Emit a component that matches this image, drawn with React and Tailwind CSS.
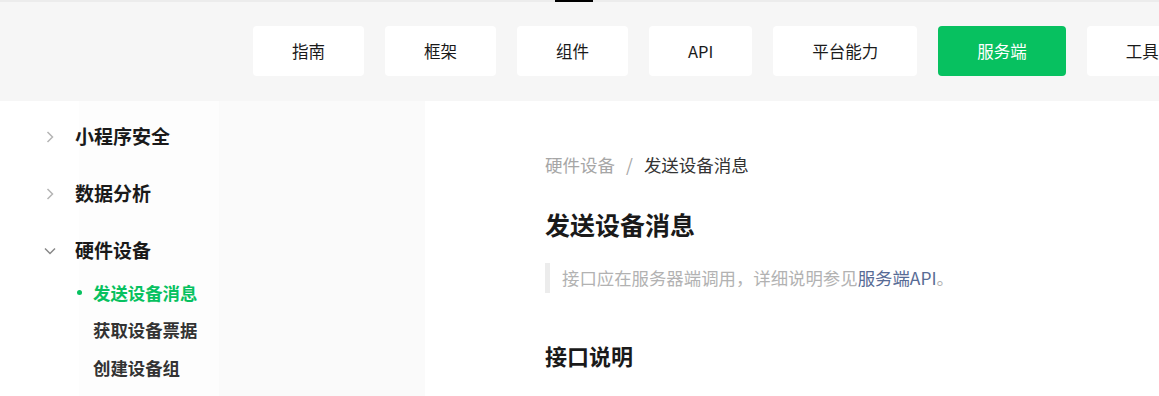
import React from 'react';

const navItems = ['指南', '框架', '组件', 'API', '平台能力', '服务端', '工具'];

const groups = [
  { title: '小程序安全', open: false },
  { title: '数据分析', open: false },
  { title: '硬件设备', open: true },
];

const subItems = [
  { title: '发送设备消息', active: true },
  { title: '获取设备票据' },
  { title: '创建设备组' },
];

function Chevron({ open }) {
  return (
    <svg width="16" height="16" viewBox="0 0 16 16" fill="none">
      {open ? (
        <path d="M3 5.5l5 5 5-5" stroke="#888888" strokeWidth="1.5" />
      ) : (
        <path d="M5.5 3l5 5-5 5" stroke="#b5b5b5" strokeWidth="1.5" />
      )}
    </svg>
  );
}

export default function App() {
  return (
    <div className="w-full h-[396px] overflow-hidden bg-white font-['Noto_Sans_CJK_SC',sans-serif] text-[#1a1a1a]">
      {/* Header */}
      <div className="relative h-[101px] bg-[#f6f6f6] border-t-2 border-[#ececec] flex items-start pt-[24px] pl-[253px] gap-[21px]">
        <div className="absolute -top-[2px] left-[555px] w-[38px] h-[2px] bg-black" />
        {navItems.map((item) => (
          <div
            key={item}
            className={
              item === '服务端'
                ? 'h-[50px] px-[39px] shrink-0 rounded-[4px] bg-[#07c160] text-white flex items-center text-[16.5px]'
                : 'h-[50px] px-[39px] shrink-0 rounded-[4px] bg-white text-[#1a1a1a] flex items-center text-[16.5px]'
            }
          >
            {item}
          </div>
        ))}
      </div>

      {/* Body */}
      <div className="flex h-[295px]">
        {/* Sidebar */}
        <div className="w-[425px] shrink-0 pt-[7px] bg-[linear-gradient(to_right,#ffffff_79px,#fdfdfd_79px,#fdfdfd_219px,#fafafa_219px)]">
          {groups.map((g) => (
            <div key={g.title} className="h-[57px] flex items-center pl-[42px]">
              <Chevron open={g.open} />
              <span className="ml-[17px] text-[19px] font-bold text-[#1a1a1a]">{g.title}</span>
            </div>
          ))}
          <div className="-mt-[5px]">
            {subItems.map((s) =>
              s.active ? (
                <div key={s.title} className="h-[37.5px] flex items-center pl-[77px]">
                  <span className="w-[5px] h-[5px] rounded-full bg-[#07c160] mr-[11px]" />
                  <span className="text-[17.4px] font-bold text-[#07c160]">{s.title}</span>
                </div>
              ) : (
                <div key={s.title} className="h-[37.5px] flex items-center pl-[93px]">
                  <span className="text-[17.4px] font-bold text-[#333333]">{s.title}</span>
                </div>
              )
            )}
          </div>
        </div>

        {/* Content */}
        <div className="flex-1 pl-[120px] pt-[52px]">
          <div className="h-[24px] flex items-center text-[17.5px]">
            <span className="text-[#a6a6a6]">硬件设备</span>
            <span className="text-[#a6a6a6] mx-[11px]">/</span>
            <span className="text-[#333333]">发送设备消息</span>
          </div>
          <h1 className="mt-[30px] text-[25px] leading-[34px] font-bold text-[#1a1a1a]">发送设备消息</h1>
          <div className="mt-[22px] border-l-[5px] border-[#ececec] pl-[12px] h-[30px] flex items-center text-[17.4px] text-[#b2b2b2]">
            接口应在服务器端调用，详细说明参见<span className="text-[#576b95]">服务端API</span>。
          </div>
          <h2 className="mt-[47px] text-[22px] leading-[30px] font-bold text-[#1a1a1a]">接口说明</h2>
        </div>
      </div>
    </div>
  );
}
